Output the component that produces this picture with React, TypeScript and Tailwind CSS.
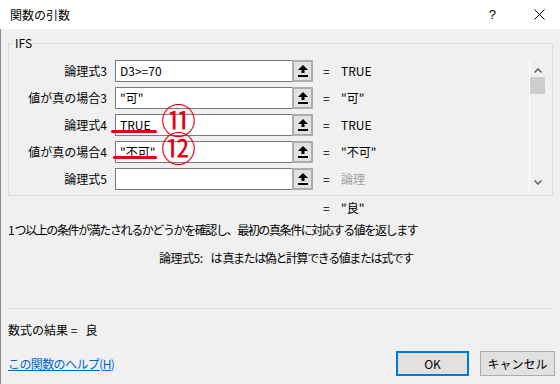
import React from 'react';

const rows = [
  { label: '論理式3', value: 'D3>=70', result: 'TRUE', dim: false },
  { label: '値が真の場合3', value: '"可"', result: '"可"', dim: false },
  { label: '論理式4', value: 'TRUE', result: 'TRUE', dim: false },
  { label: '値が真の場合4', value: '"不可"', result: '"不可"', dim: false },
  { label: '論理式5', value: '', result: '論理', dim: true },
];

function RefIcon() {
  return (
    <svg width="10" height="12" viewBox="0 0 10 12">
      <polygon points="5,0 10,5 0,5" fill="#000" />
      <rect x="3.5" y="4" width="3" height="4" fill="#000" />
      <rect x="0" y="10" width="10" height="2" fill="#000" />
    </svg>
  );
}

function ArgRow({ label, value, result, dim }: (typeof rows)[number]) {
  return (
    <div className="flex items-center h-[22px]">
      <div className="w-[98px] text-right shrink-0">{label}</div>
      <div className="ml-[8px] w-[177px] h-[22px] bg-white border border-[#7a7a7a] border-r-0 flex items-center pl-[4px]">
        {value}
      </div>
      <div className="w-[21px] h-[22px] border-2 border-[#adadad] bg-[#e1e1e1] flex items-center justify-center">
        <RefIcon />
      </div>
      <div className="ml-[10px] w-[18px]">=</div>
      <div className={dim ? 'text-[#a0a0a0]' : ''}>{result}</div>
    </div>
  );
}

export default function App() {
  return (
    <div
      className="relative w-[560px] h-[384px] bg-[#f0f0f0] overflow-hidden text-[12px] leading-[16px] text-black"
      style={{ fontFamily: '"Noto Sans CJK JP", "Noto Sans", sans-serif' }}
    >
      {/* タイトルバー */}
      <div className="h-[29px] bg-white flex items-center pl-[10px]">
        <span>関数の引数</span>
        <span className="ml-auto mr-[38px] text-[13px]" style={{ fontFamily: '"Liberation Sans", sans-serif' }}>?</span>
        <svg width="11" height="11" viewBox="0 0 11 11" className="mr-[15px]">
          <path d="M0.5 0.5 L10.5 10.5 M10.5 0.5 L0.5 10.5" stroke="#000" strokeWidth="1" />
        </svg>
      </div>

      <div className="border-l border-[#8a8a8a] h-[355px] pt-[14px] px-[7px]">
        {/* 引数グループ */}
        <div className="relative h-[153px] border border-[#dcdcdc] flex">
          <span className="absolute -top-[9px] left-[4px] px-[2px] bg-[#f0f0f0]">IFS</span>
          <div className="flex flex-col gap-[5px] pt-[16px]">
            {rows.map((r) => (
              <ArgRow key={r.label} {...r} />
            ))}
          </div>
          <div className="ml-auto mr-[7px] mt-[16px] w-[16px] h-[131px] border-l border-white flex flex-col items-center">
            <svg width="8" height="5" viewBox="0 0 8 5" className="mt-[8px]">
              <path d="M0.5 4.5 L4 1 L7.5 4.5" stroke="#606060" strokeWidth="1.5" fill="none" />
            </svg>
            <div className="mt-[4px] w-[15px] h-[17px] bg-[#cdcdcd]" />
            <svg width="8" height="5" viewBox="0 0 8 5" className="mt-auto mb-[6px]">
              <path d="M0.5 0.5 L4 4 L7.5 0.5" stroke="#606060" strokeWidth="1.5" fill="none" />
            </svg>
          </div>
        </div>

        <div className="mt-[4px] h-[16px] pl-[315px] flex">
          <span className="w-[18px]">=</span>
          <span>"良"</span>
        </div>
        <div className="mt-[6px] h-[16px] tracking-[-1.4px] whitespace-nowrap">
          1 つ以上の条件が満たされるかどうかを確認し、最初の真条件に対応する値を返します
        </div>
        <div className="mt-[12px] h-[16px] pl-[151px] whitespace-nowrap flex">
          <span className="tracking-[-0.5px]">論理式5:</span>
          <span className="ml-[8px] tracking-[-1.4px]">は 真または偽と計算できる値または式です</span>
        </div>

        <div className="mt-[42px] h-px bg-[#dcdcdc]" />

        <div className="mt-[13px] h-[16px] whitespace-nowrap">数式の結果 =&nbsp;&nbsp; 良</div>

        <div className="mt-[13px] flex items-center -mr-[2px]">
          <a className="text-[#0066cc] underline tracking-[-0.6px]">この関数のヘルプ(H)</a>
          <button className="ml-auto w-[73px] h-[25px] border-2 border-[#0078d7] bg-[#e1e1e1]">OK</button>
          <button className="ml-[11px] w-[75px] h-[25px] border border-[#adadad] bg-[#e1e1e1]">キャンセル</button>
        </div>
      </div>

      {/* 注釈（赤丸数字と下線） */}
      <span className="absolute left-[161px] top-[106px] text-[35px] leading-[26px] text-[#e60012]">⑪</span>
      <span className="absolute left-[161px] top-[134px] text-[35px] leading-[26px] text-[#e60012]">⑫</span>
      <div className="absolute left-[111px] top-[130px] w-[46px] h-[3px] rounded-full bg-[#e60012]" />
      <div className="absolute left-[113px] top-[156px] w-[44px] h-[3px] rounded-full bg-[#e60012]" />
    </div>
  );
}
